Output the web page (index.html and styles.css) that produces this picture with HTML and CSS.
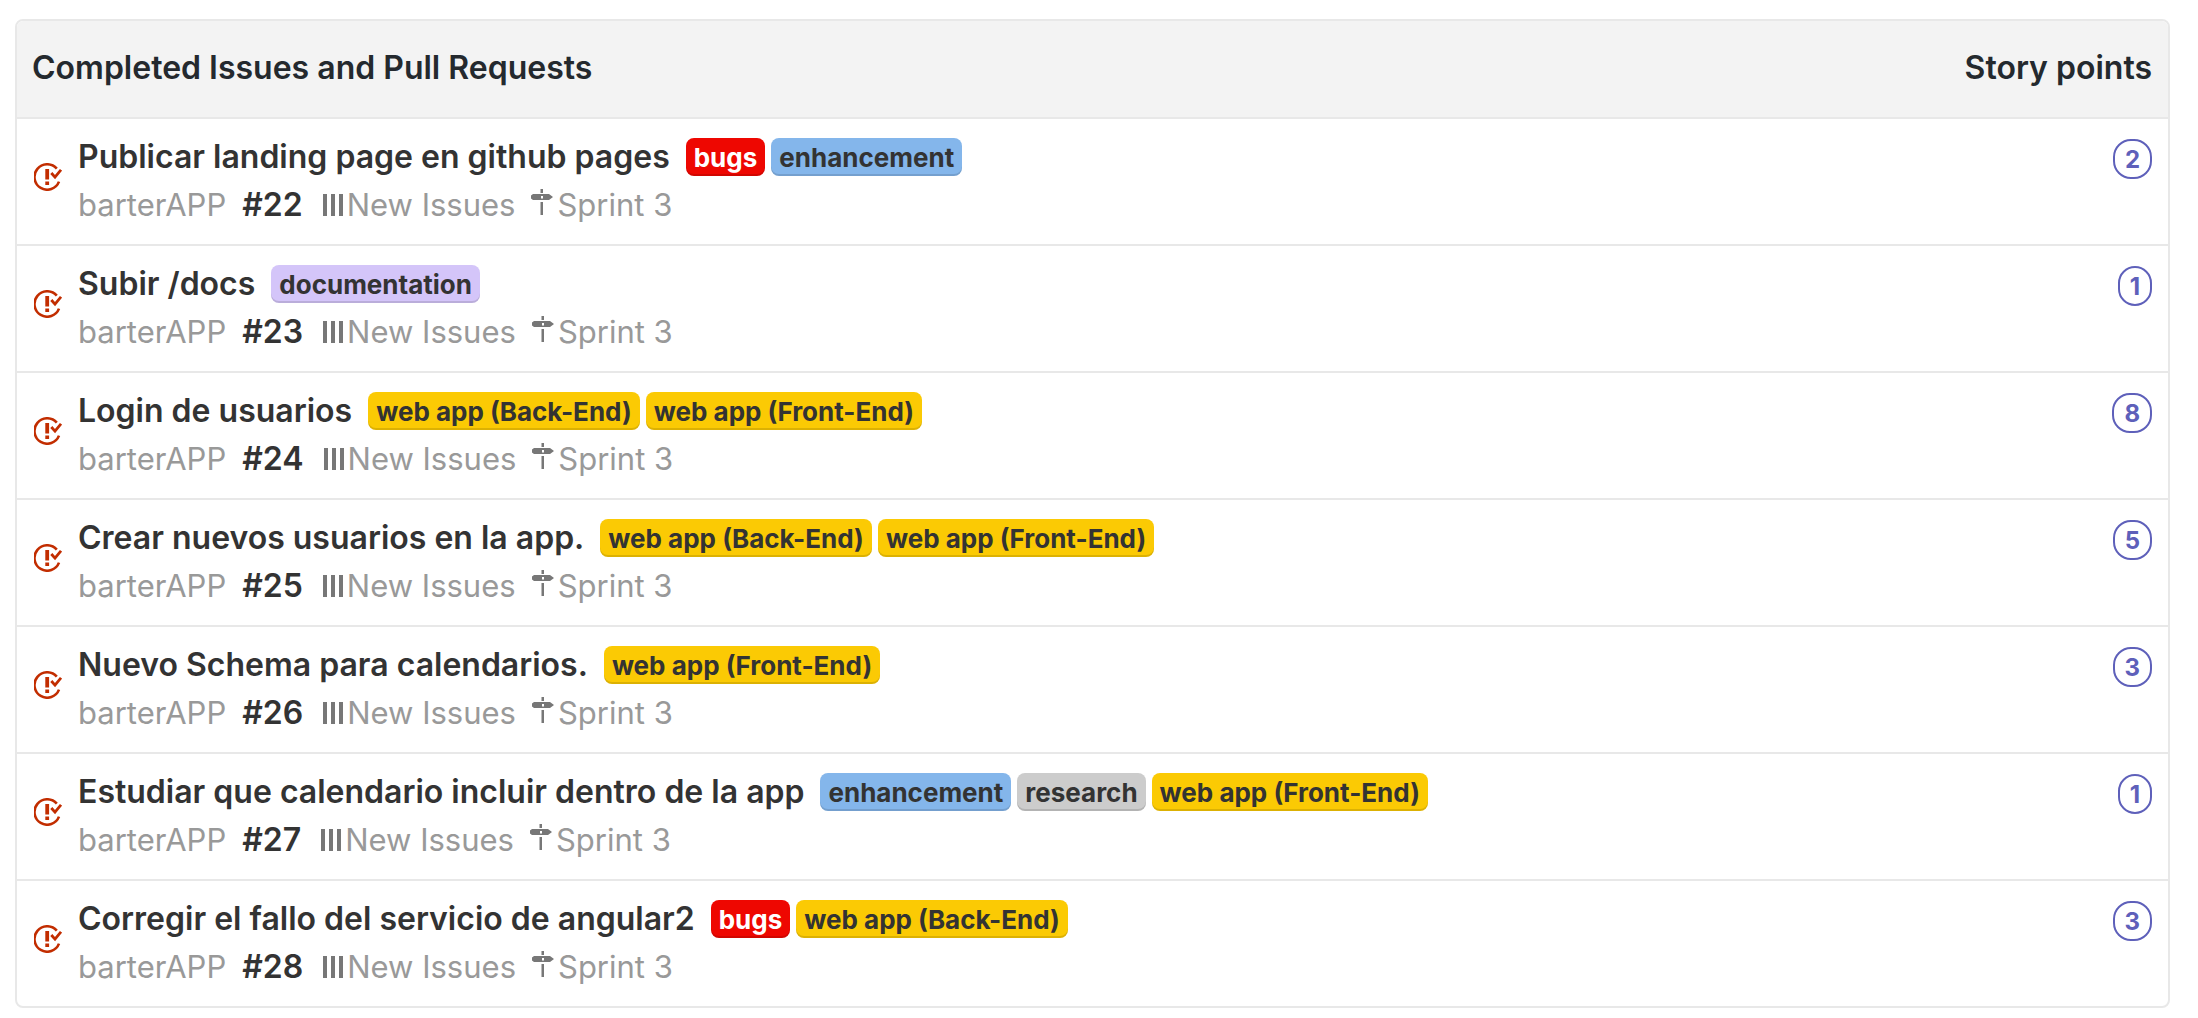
FILE: index.html
```html
<!DOCTYPE html>
<html lang="es">
<head>
<meta charset="utf-8">
<meta name="viewport" content="width=device-width, initial-scale=1">
<title>Completed Issues and Pull Requests</title>
<link rel="stylesheet" href="styles.css">
</head>
<body>
<svg class="sprite" aria-hidden="true">
  <symbol id="closed" viewBox="0 0 28 28">
    <path d="M22.800 5.700A12.700 12.700 0 1 0 25 18.600" fill="none" stroke="currentColor" stroke-width="2.600"/>
    <path d="M17.300 10l3.700 4.200L27 6.800" fill="none" stroke="currentColor" stroke-width="2.800"/>
    <path d="M11.300 6h3.800v10.500h-3.800zM11.300 18.500h3.800v3.600h-3.800z" fill="currentColor"/>
  </symbol>
  <symbol id="pipeline" viewBox="0 0 20 22">
    <path d="M0 0h4v22H0zM8 0h4v22H8zM16 0h4v22h-4z" fill="currentColor"/>
  </symbol>
  <symbol id="sprint" viewBox="0 0 22 26">
    <path d="M9.500 0h2.500v4h-2.500zM9.500 13h2.500v13h-2.500z" fill="currentColor"/>
    <path d="M2 5h16l4 3-4 3H2L0 9.500V6.500zM10 7v2.500h2V7z" fill="currentColor" fill-rule="evenodd"/>
  </symbol>
</svg>
<table class="report">
  <thead>
    <tr><th scope="col">Completed Issues and Pull Requests</th><th scope="col" class="points">Story points</th></tr>
  </thead>
  <tbody>
    <tr>
      <td><div class="issue"><svg class="state"><use href="#closed"/></svg><div>
        <div class="line"><span class="title">Publicar landing page en github pages</span><span class="label bugs">bugs</span><span class="label enhancement">enhancement</span></div>
        <div class="line meta"><span class="repo">barterAPP</span><span class="number">#22</span><span class="pipeline"><svg><use href="#pipeline"/></svg>New Issues</span><span class="sprint"><svg><use href="#sprint"/></svg>Sprint 3</span></div>
      </div></div></td>
      <td class="points"><span class="estimate">2</span></td>
    </tr>
    <tr>
      <td><div class="issue"><svg class="state"><use href="#closed"/></svg><div>
        <div class="line"><span class="title">Subir /docs</span><span class="label documentation">documentation</span></div>
        <div class="line meta"><span class="repo">barterAPP</span><span class="number">#23</span><span class="pipeline"><svg><use href="#pipeline"/></svg>New Issues</span><span class="sprint"><svg><use href="#sprint"/></svg>Sprint 3</span></div>
      </div></div></td>
      <td class="points"><span class="estimate">1</span></td>
    </tr>
    <tr>
      <td><div class="issue"><svg class="state"><use href="#closed"/></svg><div>
        <div class="line"><span class="title">Login de usuarios</span><span class="label webapp">web app (Back-End)</span><span class="label webapp">web app (Front-End)</span></div>
        <div class="line meta"><span class="repo">barterAPP</span><span class="number">#24</span><span class="pipeline"><svg><use href="#pipeline"/></svg>New Issues</span><span class="sprint"><svg><use href="#sprint"/></svg>Sprint 3</span></div>
      </div></div></td>
      <td class="points"><span class="estimate">8</span></td>
    </tr>
    <tr>
      <td><div class="issue"><svg class="state"><use href="#closed"/></svg><div>
        <div class="line"><span class="title">Crear nuevos usuarios en la app.</span><span class="label webapp">web app (Back-End)</span><span class="label webapp">web app (Front-End)</span></div>
        <div class="line meta"><span class="repo">barterAPP</span><span class="number">#25</span><span class="pipeline"><svg><use href="#pipeline"/></svg>New Issues</span><span class="sprint"><svg><use href="#sprint"/></svg>Sprint 3</span></div>
      </div></div></td>
      <td class="points"><span class="estimate">5</span></td>
    </tr>
    <tr>
      <td><div class="issue"><svg class="state"><use href="#closed"/></svg><div>
        <div class="line"><span class="title">Nuevo Schema para calendarios.</span><span class="label webapp">web app (Front-End)</span></div>
        <div class="line meta"><span class="repo">barterAPP</span><span class="number">#26</span><span class="pipeline"><svg><use href="#pipeline"/></svg>New Issues</span><span class="sprint"><svg><use href="#sprint"/></svg>Sprint 3</span></div>
      </div></div></td>
      <td class="points"><span class="estimate">3</span></td>
    </tr>
    <tr>
      <td><div class="issue"><svg class="state"><use href="#closed"/></svg><div>
        <div class="line"><span class="title">Estudiar que calendario incluir dentro de la app</span><span class="label enhancement">enhancement</span><span class="label research">research</span><span class="label webapp">web app (Front-End)</span></div>
        <div class="line meta"><span class="repo">barterAPP</span><span class="number">#27</span><span class="pipeline"><svg><use href="#pipeline"/></svg>New Issues</span><span class="sprint"><svg><use href="#sprint"/></svg>Sprint 3</span></div>
      </div></div></td>
      <td class="points"><span class="estimate">1</span></td>
    </tr>
    <tr>
      <td><div class="issue"><svg class="state"><use href="#closed"/></svg><div>
        <div class="line"><span class="title">Corregir el fallo del servicio de angular2</span><span class="label bugs">bugs</span><span class="label webapp">web app (Back-End)</span></div>
        <div class="line meta"><span class="repo">barterAPP</span><span class="number">#28</span><span class="pipeline"><svg><use href="#pipeline"/></svg>New Issues</span><span class="sprint"><svg><use href="#sprint"/></svg>Sprint 3</span></div>
      </div></div></td>
      <td class="points"><span class="estimate">3</span></td>
    </tr>
  </tbody>
</table>
</body>
</html>
```
FILE: styles.css
```css
* { box-sizing: border-box; }

body {
  margin: 0;
  padding: 19px 28px 9px 15px;
  background: #fff;
  color: #333;
  font: 32px/48px Inter, sans-serif;
}

.sprite { display: none; }

.report {
  width: 100%;
  border: 2px solid #e8e8e8;
  border-radius: 8px;
  border-spacing: 0;
  overflow: hidden;
}

th {
  padding: 23px 16px 25px 15px;
  background: #f3f3f3;
  color: #24292e;
  font-weight: 600;
  text-align: left;
}

td {
  padding: 14px 16px 15px 17px;
  border-top: 2px solid #e8e8e8;
  vertical-align: top;
}

.points { text-align: right; }
td.points { padding-top: 20px; }

.issue { display: flex; gap: 16px; }

.state {
  width: 28px;
  height: 28px;
  margin-top: 30px;
  flex: none;
  color: #c22d00;
}

.line {
  display: flex;
  align-items: center;
  gap: 6px;
  height: 48px;
}

.title {
  margin-right: 10px;
  font-weight: 600;
}

.label {
  height: 38px;
  padding: 0 8px;
  border-radius: 8px;
  box-shadow: inset 0 -2px 0 rgba(0, 0, 0, 0.12);
  font-size: 26px;
  font-weight: 700;
  line-height: 40px;
}

.bugs { background: #ee0701; color: #fff; }
.enhancement { background: #84b6eb; }
.documentation { background: #d4c5f9; }
.webapp { background: #fbca04; }
.research { background: #ccc; }

.meta { gap: 16px; color: #999; font-size: 31px; }
.number { margin-right: 4px; color: #333; font-size: 32px; font-weight: 600; }
.pipeline, .sprint { display: flex; align-items: center; gap: 4px; }
.pipeline svg { width: 20px; height: 22px; color: #777; }
.sprint svg { width: 22px; height: 26px; margin-bottom: 6px; color: #777; }

.estimate {
  display: inline-block;
  height: 40px;
  padding: 0 10px;
  border: 2px solid #5e60ba;
  border-radius: 18px;
  color: #5e60ba;
  font-size: 24px;
  font-weight: 700;
  line-height: 38px;
  vertical-align: top;
}
```
